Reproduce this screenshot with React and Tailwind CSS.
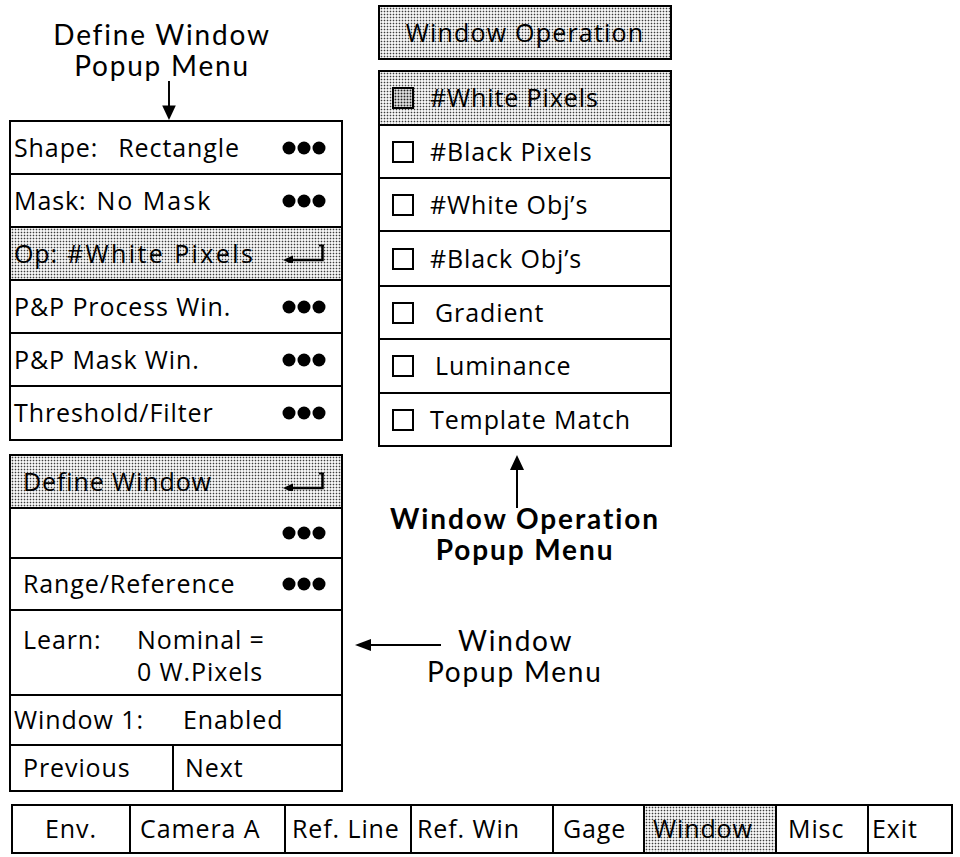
import React from 'react';

const shade =
    'bg-[#f4f4f4] bg-[radial-gradient(circle,#3c3c3c_0.7px,transparent_1.1px)] bg-size-[3px_3px]';

function Dots() {
    return (
        <svg width="44" height="14" viewBox="0 0 44 14">
            <circle cx="7" cy="7" r="6.5" fill="#000" />
            <circle cx="22" cy="7" r="6.5" fill="#000" />
            <circle cx="37" cy="7" r="6.5" fill="#000" />
        </svg>
    );
}

function Enter() {
    return (
        <svg width="44" height="19" viewBox="0 0 44 19">
            <path d="M40.5 1 V16 H10" fill="none" stroke="#000" strokeWidth="2.5" />
            <path d="M37 1.5 H42" stroke="#000" strokeWidth="2" />
            <polygon points="1,16 11,11.5 11,20.5" fill="#000" />
        </svg>
    );
}

function Row({ h, first, shaded, right, pl = 'pl-[3px]', children }) {
    return (
        <div
            className={[
                'flex items-center justify-between pr-[15px] border-black',
                first ? '' : 'border-t-2',
                shaded ? shade : 'bg-white',
                pl,
                h,
            ].join(' ')}
        >
            <div className="flex items-center">{children}</div>
            {right === 'dots' && <Dots />}
            {right === 'enter' && <Enter />}
        </div>
    );
}

function Check({ on }) {
    return (
        <span
            className={
                'w-[22px] h-[22px] border-2 border-black mr-[16px] shrink-0 ' +
                (on
                    ? 'bg-[#d6d6d6] bg-[radial-gradient(circle,#222_0.8px,transparent_1.1px)] bg-size-[3px_3px]'
                    : 'bg-white')
            }
        />
    );
}

const opItems = [
    { label: '#White Pixels', h: 'h-[52px]', on: true },
    { label: '#Black Pixels', h: 'h-[53px]' },
    { label: '#White Obj\u2019s', h: 'h-[53px]' },
    { label: '#Black Obj\u2019s', h: 'h-[55px]' },
    { label: 'Gradient', h: 'h-[53px]', pad: true },
    { label: 'Luminance', h: 'h-[54px]', pad: true },
    { label: 'Template Match', h: 'h-[53px]' },
];

const tabs = [
    { label: 'Env.', w: 'w-[118px]', pl: 'pl-[32px]' },
    { label: 'Camera A', w: 'w-[155px]', pl: 'pl-[9px]' },
    { label: 'Ref. Line', w: 'w-[126px]', pl: 'pl-[6px]' },
    { label: 'Ref. Win', w: 'w-[142px]', pl: 'pl-[5px]' },
    { label: 'Gage', w: 'w-[91px]', pl: 'pl-[9px]' },
    { label: 'Window', w: 'w-[132px]', pl: 'pl-[8px]', on: true },
    { label: 'Misc', w: 'w-[92px]', pl: 'pl-[11px]' },
    { label: 'Exit', w: 'w-[84px]', pl: 'pl-[3px]' },
];

export default function App() {
    return (
        <div className="w-[960px] h-[857px] bg-white text-black font-['Open_Sans',sans-serif] text-[25px] tracking-[0.9px] overflow-hidden">
            <div className="flex">
                {/* left column */}
                <div className="ml-[9px] w-[334px] flex flex-col">
                    <div className="h-[120px] flex flex-col">
                        <div className="w-[306px] pt-[19px] text-center font-['Lato',sans-serif] font-normal text-[28px] leading-[31px] tracking-[1.8px]">
                            <div>Define Window</div>
                            <div>Popup Menu</div>
                        </div>
                        <svg className="mt-auto ml-[152px]" width="16" height="40" viewBox="0 0 16 40">
                            <line x1="8" y1="0" x2="8" y2="27" stroke="#000" strokeWidth="2" />
                            <polygon points="1,25 15,25 8,40" fill="#000" />
                        </svg>
                    </div>

                    <div className="border-2 border-black flex flex-col">
                        <Row h="h-[51px]" first right="dots">
                            <span>Shape:</span>
                            <span className="ml-[20px]">Rectangle</span>
                        </Row>
                        <Row h="h-[53px]" right="dots">
                            <span>Mask:</span>
                            <span className="ml-[10px] tracking-[2px]">No Mask</span>
                        </Row>
                        <Row h="h-[53px]" right="enter" shaded>
                            <span>Op:</span>
                            <span className="ml-[9px] tracking-[2.4px]">#White Pixels</span>
                        </Row>
                        <Row h="h-[53px]" right="dots">P&amp;P Process Win.</Row>
                        <Row h="h-[53px]" right="dots">P&amp;P Mask Win.</Row>
                        <Row h="h-[54px]" right="dots">Threshold/Filter</Row>
                    </div>

                    <div className="mt-[13px] border-2 border-black flex flex-col">
                        <Row h="h-[51px]" first right="enter" shaded pl="pl-[12px]">Define Window</Row>
                        <Row h="h-[50px]" right="dots" pl="pl-[12px]" />
                        <Row h="h-[52px]" right="dots" pl="pl-[12px]">Range/Reference</Row>
                        <div className="h-[85px] border-t-2 border-black flex pl-[12px] pt-[12px] leading-[32px]">
                            <span className="w-[114px]">Learn:</span>
                            <div className="flex flex-col">
                                <span>Nominal =</span>
                                <span>0 W.Pixels</span>
                            </div>
                        </div>
                        <div className="h-[50px] border-t-2 border-black flex items-center pl-[3px]">
                            <span className="w-[169px]">Window 1:</span>
                            <span>Enabled</span>
                        </div>
                        <div className="h-[46px] border-t-2 border-black flex">
                            <div className="w-[163px] border-r-2 border-black flex items-center pl-[12px]">Previous</div>
                            <div className="flex items-center pl-[11px]">Next</div>
                        </div>
                    </div>
                </div>

                {/* right column */}
                <div className="ml-[12px] w-[326px] flex flex-col">
                    <div className={'ml-[23px] w-[294px] mt-[5px] h-[55px] border-2 border-black flex items-center justify-center tracking-[1.2px] ' + shade}>
                        Window Operation
                    </div>

                    <div className="ml-[23px] w-[294px] mt-[10px] border-2 border-black flex flex-col">
                        {opItems.map((it, i) => (
                            <div
                                key={it.label}
                                className={[
                                    'flex items-center pl-[12px] border-black',
                                    i === 0 ? shade : 'border-t-2 bg-white',
                                    it.h,
                                ].join(' ')}
                            >
                                <Check on={it.on} />
                                <span className={it.pad ? 'ml-[5px]' : ''}>{it.label}</span>
                            </div>
                        ))}
                    </div>

                    <svg className="ml-[154px] mt-[8px]" width="16" height="53" viewBox="0 0 16 53">
                        <polygon points="8,0 1,15 15,15" fill="#000" />
                        <line x1="8" y1="14" x2="8" y2="53" stroke="#000" strokeWidth="2" />
                    </svg>

                    <div className="ml-[23px] w-[294px] -mt-[5px] text-center font-['Lato',sans-serif] font-bold text-[28px] leading-[31px] tracking-[1.9px]">
                        <div>Window Operation</div>
                        <div>Popup Menu</div>
                    </div>

                    <div className="mt-[60px] flex flex-col font-['Lato',sans-serif] font-normal text-[28px] leading-[31px] tracking-[1.8px]">
                        <div className="flex items-center">
                            <svg width="86" height="14" viewBox="0 0 86 14" className="mt-[8px]">
                                <polygon points="0,7 16,1 16,13" fill="#000" />
                                <line x1="14" y1="7" x2="86" y2="7" stroke="#000" strokeWidth="2" />
                            </svg>
                            <span className="ml-[17px]">Window</span>
                        </div>
                        <div className="ml-[72px]">Popup Menu</div>
                    </div>
                </div>
            </div>

            {/* bottom menu bar */}
            <div className="mt-[12px] ml-[11px] flex h-[50px] border-t-2 border-b-2 border-l-2 border-black w-max">
                {tabs.map((t) => (
                    <div
                        key={t.label}
                        className={[
                            'flex items-center border-r-2 border-black',
                            t.w,
                            t.pl,
                            t.on ? shade : 'bg-white',
                        ].join(' ')}
                    >
                        {t.label}
                    </div>
                ))}
            </div>
        </div>
    );
}
